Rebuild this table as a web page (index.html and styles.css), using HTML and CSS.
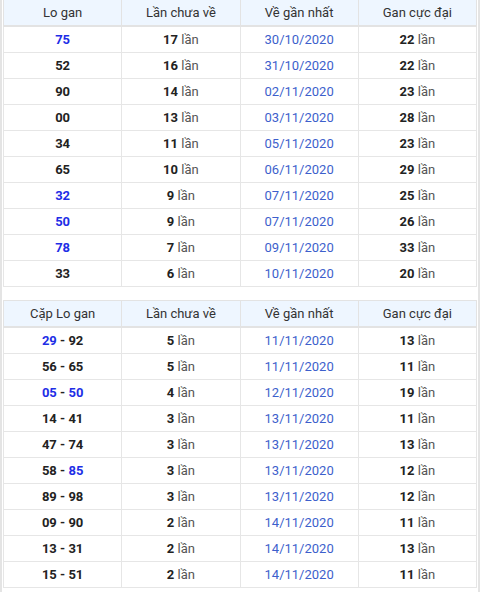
FILE: index.html
```html
<!DOCTYPE html>
<html lang="vi">
<head>
<meta charset="utf-8">
<link rel="stylesheet" href="styles.css">
</head>
<body>
<div class="wrap">
<table class="gan first">
<thead><tr><th>Lo gan</th><th>Lần chưa về</th><th>Về gần nhất</th><th>Gan cực đại</th></tr></thead>
<tbody>
<tr><td class="num hl">75</td><td><b>17</b> lần</td><td class="date">30/10/2020</td><td><b>22</b> lần</td></tr>
<tr><td class="num">52</td><td><b>16</b> lần</td><td class="date">31/10/2020</td><td><b>22</b> lần</td></tr>
<tr><td class="num">90</td><td><b>14</b> lần</td><td class="date">02/11/2020</td><td><b>23</b> lần</td></tr>
<tr><td class="num">00</td><td><b>13</b> lần</td><td class="date">03/11/2020</td><td><b>28</b> lần</td></tr>
<tr><td class="num">34</td><td><b>11</b> lần</td><td class="date">05/11/2020</td><td><b>23</b> lần</td></tr>
<tr><td class="num">65</td><td><b>10</b> lần</td><td class="date">06/11/2020</td><td><b>29</b> lần</td></tr>
<tr><td class="num hl">32</td><td><b>9</b> lần</td><td class="date">07/11/2020</td><td><b>25</b> lần</td></tr>
<tr><td class="num hl">50</td><td><b>9</b> lần</td><td class="date">07/11/2020</td><td><b>26</b> lần</td></tr>
<tr><td class="num hl">78</td><td><b>7</b> lần</td><td class="date">09/11/2020</td><td><b>33</b> lần</td></tr>
<tr><td class="num">33</td><td><b>6</b> lần</td><td class="date">10/11/2020</td><td><b>20</b> lần</td></tr>
</tbody>
</table>
<table class="gan">
<thead><tr><th>Cặp Lo gan</th><th>Lần chưa về</th><th>Về gần nhất</th><th>Gan cực đại</th></tr></thead>
<tbody>
<tr><td class="num"><span class="hl">29</span> - 92</td><td><b>5</b> lần</td><td class="date">11/11/2020</td><td><b>13</b> lần</td></tr>
<tr><td class="num">56 - 65</td><td><b>5</b> lần</td><td class="date">11/11/2020</td><td><b>11</b> lần</td></tr>
<tr><td class="num"><span class="hl">05</span> - <span class="hl">50</span></td><td><b>4</b> lần</td><td class="date">12/11/2020</td><td><b>19</b> lần</td></tr>
<tr><td class="num">14 - 41</td><td><b>3</b> lần</td><td class="date">13/11/2020</td><td><b>11</b> lần</td></tr>
<tr><td class="num">47 - 74</td><td><b>3</b> lần</td><td class="date">13/11/2020</td><td><b>13</b> lần</td></tr>
<tr><td class="num">58 - <span class="hl">85</span></td><td><b>3</b> lần</td><td class="date">13/11/2020</td><td><b>12</b> lần</td></tr>
<tr><td class="num">89 - 98</td><td><b>3</b> lần</td><td class="date">13/11/2020</td><td><b>12</b> lần</td></tr>
<tr><td class="num">09 - 90</td><td><b>2</b> lần</td><td class="date">14/11/2020</td><td><b>11</b> lần</td></tr>
<tr><td class="num">13 - 31</td><td><b>2</b> lần</td><td class="date">14/11/2020</td><td><b>13</b> lần</td></tr>
<tr><td class="num">15 - 51</td><td><b>2</b> lần</td><td class="date">14/11/2020</td><td><b>11</b> lần</td></tr>
</tbody>
</table>
</div>
</body>
</html>
```
FILE: styles.css
```css
html, body {
  margin: 0;
  padding: 0;
  background: #fff;
}
body {
  font-family: Roboto, "Liberation Sans", Arial, sans-serif;
  font-size: 13px;
  color: #555;
}
.wrap {
  border-left: 2px solid #e4e4e4;
  border-right: 2px solid #e4e4e4;
  padding: 0 1px 4px;
  min-height: 588px;
}
.gan {
  width: 100%;
  border-collapse: collapse;
  table-layout: fixed;
  border: 1px solid #e3e3e3;
}
.gan.first {
  margin-top: -1px;
  margin-bottom: 13px;
}
.gan th {
  background: #eef6ff;
  font-weight: 400;
  color: #333;
  height: 25px;
  padding: 0;
  border: 1px solid #e3e3e3;
  border-bottom: 2px solid #e3e3e3;
  text-align: center;
}
.gan td {
  height: 25px;
  padding: 0;
  border: 1px solid #e6e6e6;
  text-align: center;
  vertical-align: middle;
}
.gan b {
  color: #222;
  font-weight: 700;
}
.num {
  font-weight: 700;
  color: #222;
}
.hl {
  color: #1e2ee6;
}
td.hl {
  color: #1e2ee6;
}
.date {
  color: #3d5fcc;
}
```
